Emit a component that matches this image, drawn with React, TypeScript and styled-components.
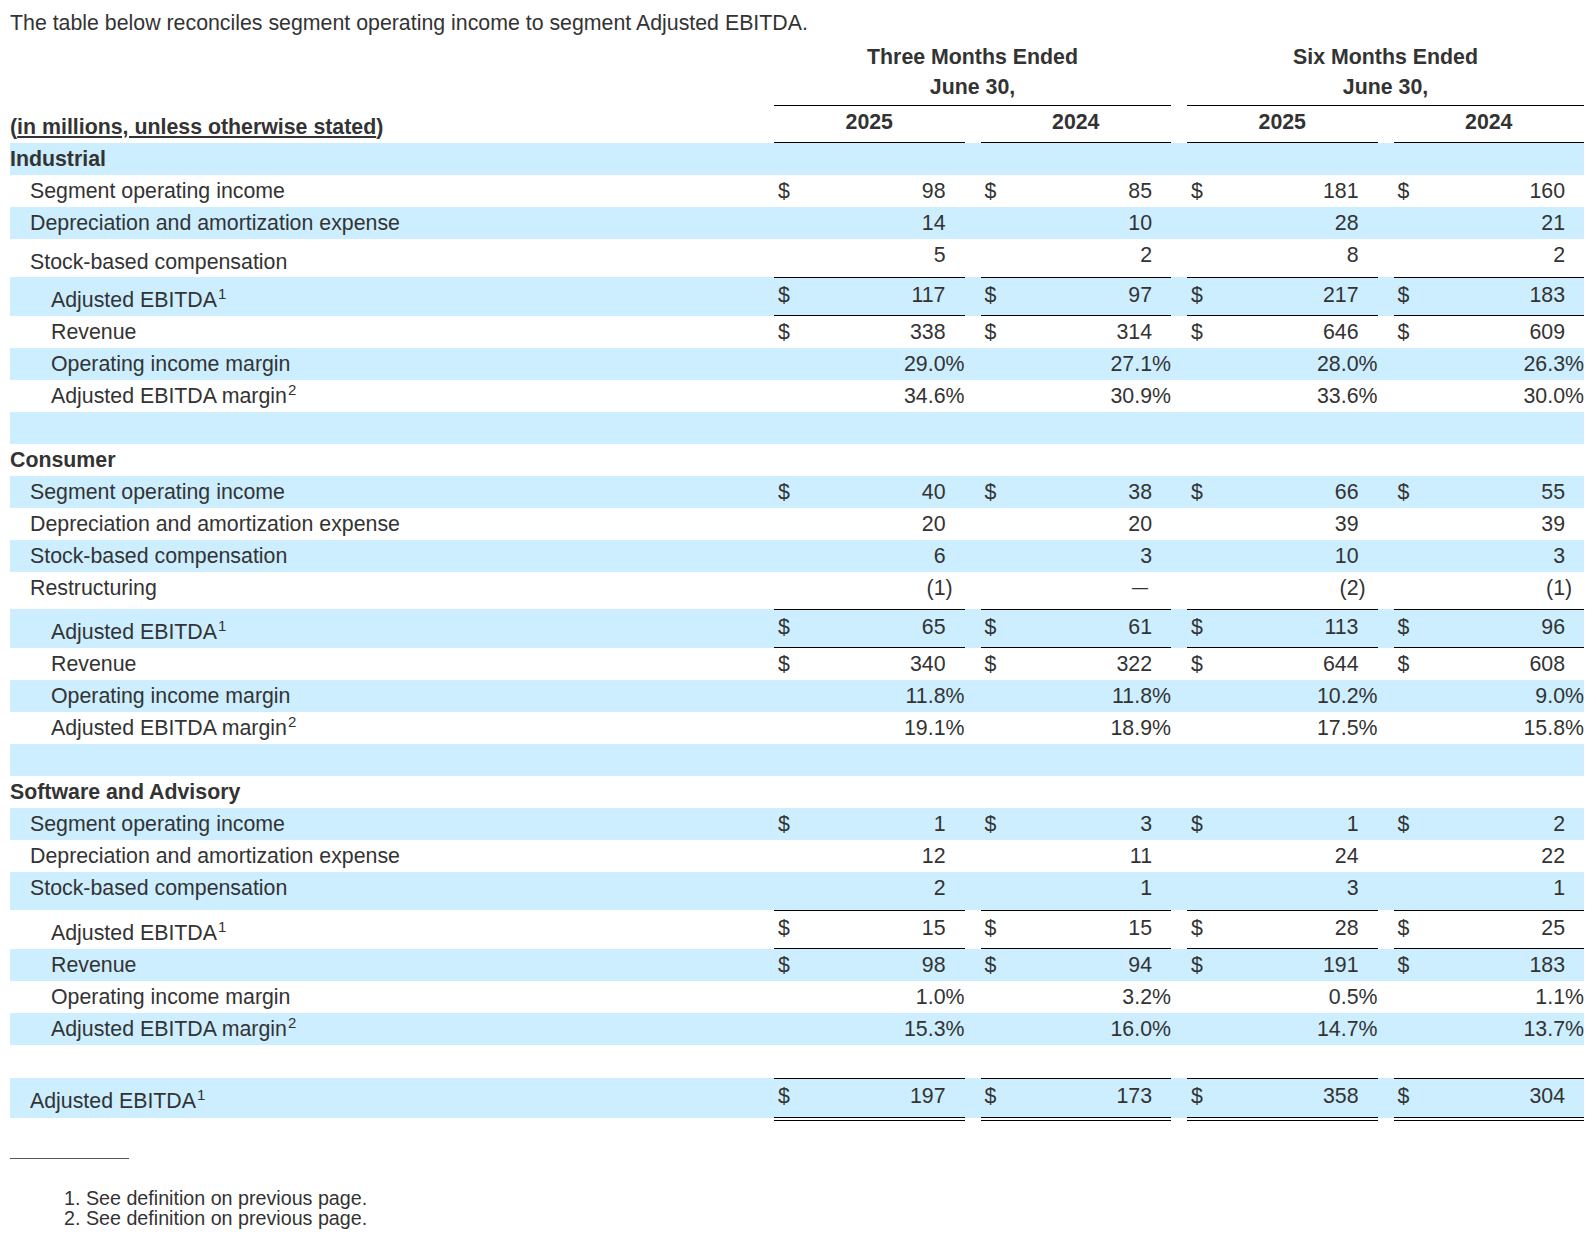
import React from 'react';
import styled, { createGlobalStyle, css } from 'styled-components';

const GlobalStyle = createGlobalStyle`
  html, body { margin: 0; padding: 0; background: #ffffff; }
  body {
    font-family: "Liberation Sans", Arial, Helvetica, sans-serif;
    color: #333333;
  }
`;

const BLUE = '#cceeff';

const Page = styled.div`
  width: 1574px;
  padding: 8px 0 24px 10px;
  font-size: 21.33px;
`;

const Intro = styled.p`
  margin: 0 0 4px;
  line-height: 30px;
`;

const Row = styled.div<{ $h: number; $blue?: boolean }>`
  display: grid;
  grid-template-columns: 748px repeat(4, 1fr);
  grid-template-rows: ${p => p.$h}px;
  column-gap: 16px;
  height: ${p => p.$h}px;
  align-items: start;
  background: ${p => (p.$blue ? BLUE : 'transparent')};
`;

const GroupHead = styled.div<{ $col: number; $rule?: boolean }>`
  grid-column: ${p => p.$col} / span 2;
  height: 100%;
  box-sizing: border-box;
  text-align: center;
  font-weight: 700;
  line-height: 30px;
  ${p => p.$rule && css`border-bottom: 1px solid #000;`}
`;

const YearHead = styled.div`
  height: 100%;
  box-sizing: border-box;
  padding-top: 1px;
  text-align: center;
  font-weight: 700;
  line-height: 30px;
  border-bottom: 1px solid #000;
`;

const UnitsLabel = styled.div`
  padding-top: 6px;
  line-height: 30px;
  font-weight: 700;
  white-space: nowrap;
`;

const Label = styled.div<{ $indent: number; $top: number; $bold?: boolean }>`
  padding-left: ${p => p.$indent}px;
  padding-top: ${p => p.$top}px;
  line-height: 30px;
  font-weight: ${p => (p.$bold ? 700 : 400)};
  white-space: nowrap;
`;

const Sup = styled.span`
  font-size: 15px;
  position: relative;
  top: -8px;
  margin-left: 1px;
`;

type Rule = 'none' | 'sub' | 'total';

const ValueCell = styled.div<{ $top: number; $rule: Rule }>`
  display: flex;
  align-items: flex-start;
  box-sizing: border-box;
  height: 100%;
  padding-top: ${p => p.$top}px;
  line-height: 30px;
  white-space: nowrap;
  ${p =>
    p.$rule === 'sub' &&
    css`
      border-top: 1px solid #000;
      border-bottom: 1px solid #000;
    `}
  ${p =>
    p.$rule === 'total' &&
    css`
      border-top: 1px solid #000;
      border-bottom: 4px double #000;
      height: calc(100% + 3px);
    `}
`;

const Dollar = styled.span`
  padding-left: 4px;
`;

const Amount = styled.span`
  margin-left: auto;
  text-align: right;
`;

const Dash = styled.span`
  margin-left: auto;
  margin-right: 4px;
  font-size: 16px;
`;

const Suffix = styled.span`
  flex: none;
  width: 19px;
  text-align: left;
`;

const FootRule = styled.div`
  width: 119px;
  margin-top: 40px;
  border-top: 1px solid #555;
`;

const Notes = styled.ol`
  margin: 29px 0 0;
  padding: 0 0 0 54px;
  list-style: none;
  font-size: 19.7px;
  line-height: 20px;
`;

type LineItem = {
  label: string;
  sup?: string;
  indent: number;
  h: number;
  blue: boolean;
  bold?: boolean;
  labelTop?: number;
  valueTop?: number;
  rule?: Rule;
  values?: string[];
  dollar?: boolean;
};

const parse = (raw: string): { main: string; suffix: string; dash: boolean } => {
  if (raw === '—') return { main: '—', suffix: '', dash: true };
  if (raw.endsWith('%')) return { main: raw.slice(0, -1), suffix: '%', dash: false };
  if (raw.endsWith(')')) return { main: raw.slice(0, -1), suffix: ')', dash: false };
  return { main: raw, suffix: '', dash: false };
};

const rows: LineItem[] = [
  { label: 'Industrial', indent: 0, h: 32, blue: true, bold: true },
  { label: 'Segment operating income', indent: 20, h: 32, blue: false, values: ['98', '85', '181', '160'], dollar: true },
  { label: 'Depreciation and amortization expense', indent: 20, h: 32, blue: true, values: ['14', '10', '28', '21'] },
  { label: 'Stock-based compensation', indent: 20, h: 38, blue: false, labelTop: 7, values: ['5', '2', '8', '2'] },
  { label: 'Adjusted EBITDA', sup: '1', indent: 41, h: 39, blue: true, labelTop: 7, valueTop: 1, rule: 'sub', values: ['117', '97', '217', '183'], dollar: true },
  { label: 'Revenue', indent: 41, h: 32, blue: false, values: ['338', '314', '646', '609'], dollar: true },
  { label: 'Operating income margin', indent: 41, h: 32, blue: true, values: ['29.0%', '27.1%', '28.0%', '26.3%'] },
  { label: 'Adjusted EBITDA margin', sup: '2', indent: 41, h: 32, blue: false, values: ['34.6%', '30.9%', '33.6%', '30.0%'] },
  { label: '', indent: 0, h: 32, blue: true },
  { label: 'Consumer', indent: 0, h: 32, blue: false, bold: true },
  { label: 'Segment operating income', indent: 20, h: 32, blue: true, values: ['40', '38', '66', '55'], dollar: true },
  { label: 'Depreciation and amortization expense', indent: 20, h: 32, blue: false, values: ['20', '20', '39', '39'] },
  { label: 'Stock-based compensation', indent: 20, h: 32, blue: true, values: ['6', '3', '10', '3'] },
  { label: 'Restructuring', indent: 20, h: 37, blue: false, values: ['(1)', '—', '(2)', '(1)'] },
  { label: 'Adjusted EBITDA', sup: '1', indent: 41, h: 39, blue: true, labelTop: 7, valueTop: 1, rule: 'sub', values: ['65', '61', '113', '96'], dollar: true },
  { label: 'Revenue', indent: 41, h: 32, blue: false, values: ['340', '322', '644', '608'], dollar: true },
  { label: 'Operating income margin', indent: 41, h: 32, blue: true, values: ['11.8%', '11.8%', '10.2%', '9.0%'] },
  { label: 'Adjusted EBITDA margin', sup: '2', indent: 41, h: 32, blue: false, values: ['19.1%', '18.9%', '17.5%', '15.8%'] },
  { label: '', indent: 0, h: 32, blue: true },
  { label: 'Software and Advisory', indent: 0, h: 32, blue: false, bold: true },
  { label: 'Segment operating income', indent: 20, h: 32, blue: true, values: ['1', '3', '1', '2'], dollar: true },
  { label: 'Depreciation and amortization expense', indent: 20, h: 32, blue: false, values: ['12', '11', '24', '22'] },
  { label: 'Stock-based compensation', indent: 20, h: 38, blue: true, values: ['2', '1', '3', '1'] },
  { label: 'Adjusted EBITDA', sup: '1', indent: 41, h: 39, blue: false, labelTop: 7, valueTop: 1, rule: 'sub', values: ['15', '15', '28', '25'], dollar: true },
  { label: 'Revenue', indent: 41, h: 32, blue: true, values: ['98', '94', '191', '183'], dollar: true },
  { label: 'Operating income margin', indent: 41, h: 32, blue: false, values: ['1.0%', '3.2%', '0.5%', '1.1%'] },
  { label: 'Adjusted EBITDA margin', sup: '2', indent: 41, h: 32, blue: true, values: ['15.3%', '16.0%', '14.7%', '13.7%'] },
  { label: '', indent: 0, h: 33, blue: false },
  { label: 'Adjusted EBITDA', sup: '1', indent: 20, h: 40, blue: true, labelTop: 7, valueTop: 1, rule: 'total', values: ['197', '173', '358', '304'], dollar: true },
];

const BASE = 1;

const DataRow: React.FC<{ item: LineItem }> = ({ item }) => (
  <Row $h={item.h} $blue={item.blue}>
    <Label $indent={item.indent} $top={BASE + (item.labelTop ?? 0)} $bold={item.bold}>
      {item.label}
      {item.sup && <Sup>{item.sup}</Sup>}
    </Label>
    {item.values &&
      item.values.map((raw, i) => {
        const { main, suffix, dash } = parse(raw);
        return (
          <ValueCell key={i} $top={BASE + (item.valueTop ?? 0)} $rule={item.rule ?? 'none'}>
            {item.dollar && <Dollar>$</Dollar>}
            {dash ? <Dash>{main}</Dash> : <Amount>{main}</Amount>}
            <Suffix>{suffix}</Suffix>
          </ValueCell>
        );
      })}
  </Row>
);

export default function App() {
  return (
    <Page>
      <GlobalStyle />
      <Intro>The table below reconciles segment operating income to segment Adjusted EBITDA.</Intro>
      <Row $h={30}>
        <div />
        <GroupHead $col={2}>Three Months Ended</GroupHead>
        <GroupHead $col={4}>Six Months Ended</GroupHead>
      </Row>
      <Row $h={34}>
        <div />
        <GroupHead $col={2} $rule>June 30,</GroupHead>
        <GroupHead $col={4} $rule>June 30,</GroupHead>
      </Row>
      <Row $h={37}>
        <UnitsLabel>
          (<u>in millions, unless otherwise stated</u>)
        </UnitsLabel>
        <YearHead>2025</YearHead>
        <YearHead>2024</YearHead>
        <YearHead>2025</YearHead>
        <YearHead>2024</YearHead>
      </Row>
      {rows.map((item, i) => (
        <DataRow key={i} item={item} />
      ))}
      <FootRule />
      <Notes>
        <li>1. See definition on previous page.</li>
        <li>2. See definition on previous page.</li>
      </Notes>
    </Page>
  );
}
